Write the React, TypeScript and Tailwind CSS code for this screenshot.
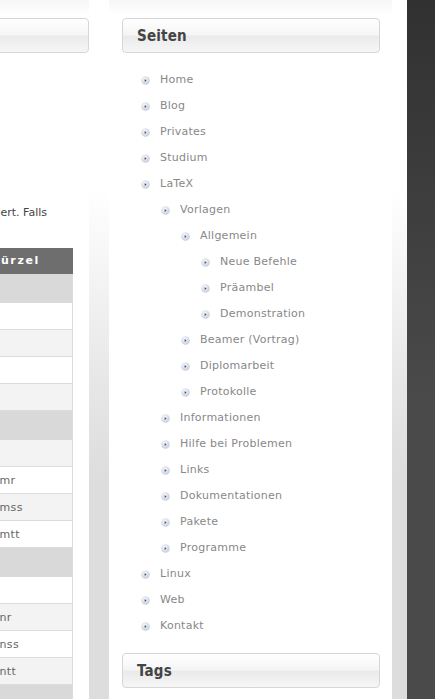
const menu: [string, number][] = [
  ["Home", 0],
  ["Blog", 0],
  ["Privates", 0],
  ["Studium", 0],
  ["LaTeX", 0],
  ["Vorlagen", 1],
  ["Allgemein", 2],
  ["Neue Befehle", 3],
  ["Präambel", 3],
  ["Demonstration", 3],
  ["Beamer (Vortrag)", 2],
  ["Diplomarbeit", 2],
  ["Protokolle", 2],
  ["Informationen", 1],
  ["Hilfe bei Problemen", 1],
  ["Links", 1],
  ["Dokumentationen", 1],
  ["Pakete", 1],
  ["Programme", 1],
  ["Linux", 0],
  ["Web", 0],
  ["Kontakt", 0],
]

// kind: g = group row, w = white row, s = striped row
const rows: { kind: "g" | "w" | "s"; text?: string }[] = [
  { kind: "g" },
  { kind: "w" },
  { kind: "s" },
  { kind: "w" },
  { kind: "s" },
  { kind: "g" },
  { kind: "s" },
  { kind: "w", text: "cmr" },
  { kind: "s", text: "cmss" },
  { kind: "w", text: "cmtt" },
  { kind: "g" },
  { kind: "w" },
  { kind: "s", text: "cnr" },
  { kind: "w", text: "cnss" },
  { kind: "s", text: "cntt" },
  { kind: "g" },
]

const indent = ["pl-[32px]", "pl-[52px]", "pl-[72px]", "pl-[92px]"]

const Bullet = () => (
  <svg width="9" height="9" viewBox="0 0 9 9" className="shrink-0">
    <defs>
      <radialGradient id="bul" cx="40%" cy="35%" r="70%">
        <stop offset="0" stopColor="#f6f8fb" />
        <stop offset="1" stopColor="#c3cbdb" />
      </radialGradient>
    </defs>
    <circle cx="4.5" cy="4.5" r="4.3" fill="url(#bul)" />
    <path d="M3.7 3.1 L5.5 4.5 L3.7 5.9 Z" fill="#3a4561" />
  </svg>
)

const BoxHead = ({ title, className }: { title?: string; className?: string }) => (
  <div
    className={
      "h-[35px] rounded-[4px] border border-[#d6d6d6] bg-[linear-gradient(to_bottom,#ffffff_0%,#f5f5f5_47%,#eaeaea_53%,#f0f0f0_75%,#f6f6f6_100%)] flex items-center pl-[14px] " +
      (className ?? "")
    }
  >
    {title && (
      <span className="font-['DejaVu_Sans_Condensed','DejaVu_Sans',sans-serif] font-bold text-[15px] text-[#444] tracking-[0.2px] pt-[1px]">
        {title}
      </span>
    )}
  </div>
)

const App = () => {
  return (
    <div className="flex h-[699px] w-[435px] overflow-hidden bg-white font-['DejaVu_Sans',sans-serif]">
      {/* left content, cut off by the window */}
      <div className="w-[89px] shrink-0 overflow-hidden flex flex-col items-end bg-[linear-gradient(to_bottom,#f6f6f6,#ffffff_14px)]">
        <BoxHead className="w-[400px] mt-[18px] shrink-0" />
        <p className="w-[400px] shrink-0 mt-[152px] pr-[42px] text-right whitespace-nowrap text-[11px] leading-[16px] text-[#444]">
          wird die Schrift automatisch geändert. Falls
        </p>
        <div className="w-[98px] shrink-0 mt-[27px] pr-[16px]">
          <div className="h-[26px] bg-[#6e6e6e] flex items-center text-white font-bold text-[11px] tracking-[1.6px] whitespace-nowrap">
            Kürzel
          </div>
          {rows.map((r, i) => (
            <div
              key={i}
              className={
                "flex items-center whitespace-nowrap text-[11px] tracking-[0.4px] text-[#666] border-r border-[#dcdcdc] pl-[2px] pt-[2px] " +
                (r.kind === "g"
                  ? "h-[29px] bg-[#d9d9d9]"
                  : r.kind === "w"
                  ? "h-[27px] bg-white border-b"
                  : "h-[27px] bg-[#f3f3f3] border-b")
              }
            >
              {r.text}
            </div>
          ))}
        </div>
      </div>

      {/* shadow strip */}
      <div className="w-[20px] shrink-0 bg-[linear-gradient(to_bottom,#ffffff_190px,#e7e7e7_380px,#dddddd_480px)]" />

      {/* sidebar */}
      <div className="w-[283px] shrink-0 pl-[13px] pr-[12px] bg-[linear-gradient(to_bottom,#f6f6f6,#ffffff_14px)]">
        <BoxHead title="Seiten" className="mt-[18px]" />
        <ul className="pt-[14px] -ml-[13px]">
          {menu.map(([label, lvl]) => (
            <li key={label} className={"h-[26px] flex items-center gap-[10px] " + indent[lvl]}>
              <Bullet />
              <span className="text-[11px] tracking-[0.25px] text-[#888]">{label}</span>
            </li>
          ))}
        </ul>
        <BoxHead title="Tags" className="mt-[14px]" />
      </div>

      {/* right shadow strip */}
      <div className="w-[15px] shrink-0 bg-[linear-gradient(to_bottom,#ffffff_190px,#e7e7e7_380px,#dddddd_480px)]" />

      {/* dark page edge */}
      <div className="flex-1 bg-[linear-gradient(to_bottom,#313131,#4a4a4a_400px)]" />
    </div>
  )
}

export default App
